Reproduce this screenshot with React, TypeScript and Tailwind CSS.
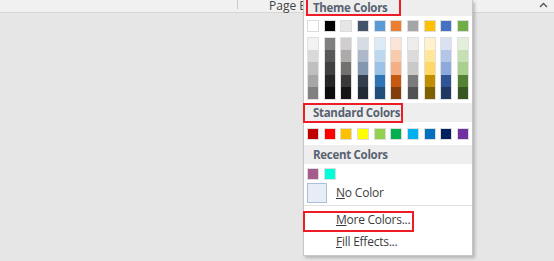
import React from 'react';

const theme = ['#ffffff', '#000000', '#e7e6e6', '#44546a', '#5b9bd5', '#ed7d31', '#a5a5a5', '#ffc000', '#4472c4', '#70ad47'];
const shades = [
  ['#f2f2f2', '#d9d9d9', '#bfbfbf', '#a6a6a6', '#808080'],
  ['#7f7f7f', '#595959', '#404040', '#262626', '#0d0d0d'],
  ['#d0cece', '#aeaaaa', '#757070', '#3a3838', '#161616'],
  ['#d6dce4', '#adb9ca', '#8497b0', '#333f4f', '#222a35'],
  ['#ddebf7', '#bdd7ee', '#9bc2e6', '#2f75b5', '#1f4e78'],
  ['#fce4d6', '#f8cbad', '#f4b084', '#c65911', '#833c0c'],
  ['#ededed', '#dbdbdb', '#c9c9c9', '#7b7b7b', '#525252'],
  ['#fff2cc', '#ffe699', '#ffd966', '#bf8f00', '#806000'],
  ['#d9e1f2', '#b4c6e7', '#8ea9db', '#305496', '#203764'],
  ['#e2efda', '#c6e0b4', '#a9d08e', '#548235', '#375623'],
];
const standard = ['#c00000', '#ff0000', '#ffc000', '#ffff00', '#92d050', '#00b050', '#00b0f0', '#0070c0', '#002060', '#7030a0'];
const recent = ['#a45c8c', '#00ffd8'];

function Swatch({ c }: { c: string }) {
  return (
    <div className="w-[12px] h-[12px] border border-[#dcdcdc] box-border">
      <div className="w-full h-full" style={{ backgroundColor: c }} />
    </div>
  );
}

function Header({ label, children, h }: { label: string; children?: React.ReactNode; h: string }) {
  return (
    <div className={`relative ${h} bg-[#eeeeee] flex items-center pl-[9px] text-[11.5px] font-bold tracking-[-0.3px] text-[#586270]`}>
      {label}
      {children}
    </div>
  );
}

export default function App() {
  return (
    <div className="relative w-[554px] h-[261px] bg-[#e6e6e6] overflow-hidden" style={{ fontFamily: '"Open Sans", "Noto Sans", sans-serif' }}>
      {/* top ribbon strip */}
      <div className="relative h-[13px] bg-[#f1f1f1] border-b border-[#d6d6d6]">
        <div className="absolute left-[237px] top-0 h-[9px] w-px bg-[#c8c8c8]" />
        <div className="absolute left-[269px] top-0 text-[12px] leading-[11px] text-[#444444]">Page B</div>
        <svg className="absolute left-[539px] top-[2px]" width="9" height="6" viewBox="0 0 9 6">
          <polyline points="1,5 4.5,1.5 8,5" fill="none" stroke="#555" strokeWidth="1.4" />
        </svg>
      </div>

      {/* color menu */}
      <div className="absolute left-[303px] top-0 w-[170px] h-[256px] bg-white border-x border-b border-[#c6c6c6] shadow-[2px_2px_3px_rgba(0,0,0,0.22)] flex flex-col">
        <Header label="Theme Colors" h="h-[16px]">
          <div className="absolute left-[2px] top-[-2px] w-[95px] h-[18px] border-2 border-[#ee1c25]" />
        </Header>
        <div className="pl-[3px] pt-[4px]">
          <div className="grid grid-cols-10 w-[162px] gap-x-[4.6px]">
            {theme.map((c) => (
              <Swatch key={c} c={c} />
            ))}
          </div>
          <div className="grid grid-cols-10 w-[162px] gap-x-[4.6px] mt-[5px]">
            {shades.map((col, i) => (
              <div key={i} className="w-[12px] border border-[#e0e0e0] flex flex-col">
                {col.map((c) => (
                  <div key={c} className="h-[12.2px]" style={{ backgroundColor: c }} />
                ))}
              </div>
            ))}
          </div>
        </div>
        <div className="mt-[3px]">
          <Header label="Standard Colors" h="h-[19px]">
            <div className="absolute left-[-1px] top-[0px] w-[100px] h-[20px] border-2 border-[#ee1c25]" />
          </Header>
        </div>
        <div className="pl-[3px] pt-[6px]">
          <div className="grid grid-cols-10 w-[162px] gap-x-[4.6px]">
            {standard.map((c) => (
              <Swatch key={c} c={c} />
            ))}
          </div>
        </div>
        <div className="mt-[5px]">
          <Header label="Recent Colors" h="h-[19px]" />
        </div>
        <div className="pl-[3px] pt-[4px] flex gap-x-[4.6px]">
          {recent.map((c) => (
            <Swatch key={c} c={c} />
          ))}
        </div>
        <div className="flex items-center mt-[3px] pl-[3px] h-[20px]">
          <div className="w-[20px] h-[20px] border border-[#a9bfdc] bg-[#e6edf7]" />
          <span className="ml-[9px] text-[12px] tracking-[-0.2px] text-[#3c3c3c]">
            <span className="underline">N</span>o Color
          </span>
        </div>
        <div className="mt-[2px] h-px bg-[#e1e1e1]" />
        <div className="relative h-[22px] mt-[3px] flex items-center pl-[32px] text-[12px] tracking-[-0.25px] text-[#3c3c3c]">
          <span>
            <span className="underline">M</span>ore Colors...
          </span>
          <div className="absolute left-[-1px] top-[2px] w-[111px] h-[21px] border-2 border-[#ee1c25]" />
        </div>
        <div className="h-[22px] flex items-center pl-[32px] text-[12px] tracking-[-0.25px] text-[#3c3c3c]">
          <span>
            <span className="underline">F</span>ill Effects...
          </span>
        </div>
      </div>
    </div>
  );
}
